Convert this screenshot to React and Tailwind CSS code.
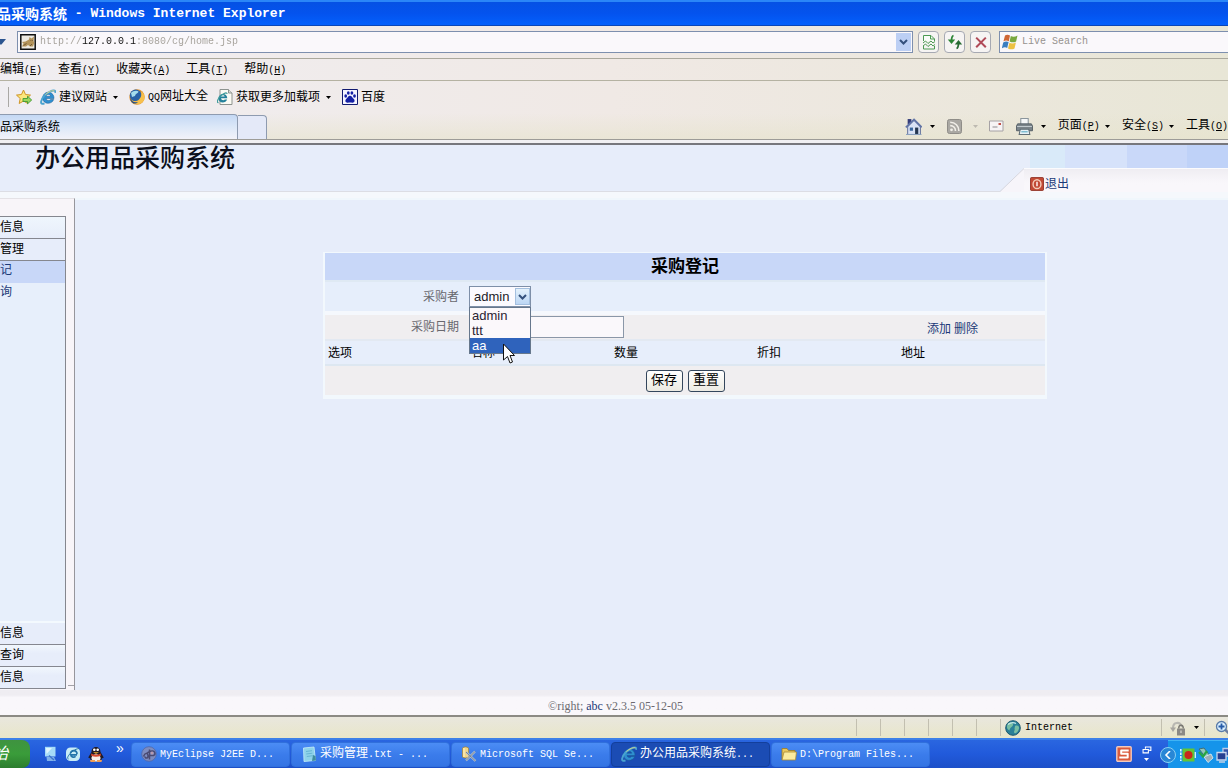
import React, { useState } from "react";

const quickLinks = [
  { label: "建议网站", icon: "ie", arrow: true },
  { prefix: "QQ", label: "网址大全", icon: "fox" },
  { label: "获取更多加载项", icon: "page", arrow: true },
  { label: "百度", icon: "paw" },
];

const menus = [
  ["编辑", "E"],
  ["查看", "Y"],
  ["收藏夹", "A"],
  ["工具", "T"],
  ["帮助", "H"],
];

const tasks = [
  { icon: "eclipse", latin: "MyEclipse J2EE D..." },
  { icon: "note", text: "采购管理", latin: ".txt - ..." },
  { icon: "sql", latin: "Microsoft SQL Se..." },
  { icon: "ie", text: "办公用品采购系统", latin: "...", active: true },
  { icon: "folder", latin: "D:\\Program Files..." },
];

const users = ["admin", "ttt", "aa"];

const Mono = ({ children }) => (
  <span className="font-['Liberation_Mono',monospace] text-[10px]">{children}</span>
);

const Arrow = ({ className = "text-black" }) => (
  <svg viewBox="0 0 5 3" className={`w-[5px] h-[3px] shrink-0 ${className}`}>
    <path d="M0 0h5L2.5 3z" fill="currentColor" />
  </svg>
);

const Icon = ({ name, className = "w-4 h-4" }) => {
  const shapes = {
    ie: (
      <>
        <path d="M14 9.500H6c.3 2.300 3.600 2.500 4.500 1h3.200C11.800 16 2.700 15.600 2.700 9c0-7.500 11.500-7.800 11.300.5zM6 7.200h4.700C10.300 4.800 6.400 4.800 6 7.200z" fill="#2f8fd0" stroke="#17598f" strokeWidth=".5" />
        <path d="M4.500 14.300C-.5 16.500.3 11 4.500 6.500 9 2 16.500-.8 15 3.800" fill="none" stroke="#49a3cf" strokeWidth="1.900" />
        <path d="M5.500 5.500C8.500 2.700 12.500 1 14.500 1.900" fill="none" stroke="#e0d486" strokeWidth="1" />
      </>
    ),
    fox: (
      <>
        <circle cx="8" cy="8" r="7.700" fill="#e3932c" />
        <circle cx="6.700" cy="6.500" r="5.900" fill="#2a62a6" />
        <path d="M2 4c2-2.500 6-3 7.500-1.500C9 4.500 7 4 6 7L3 8z" fill="#a5dcec" />
        <path d="M12 2c4.500 3.500 5 9 .5 12-4 2.500-9.500.8-11-3.500 3 2.500 6.500 2 8.500 0s3-5 2-8.500z" fill="#f7c04c" />
        <path d="M1 8c.5 4 4.500 6 8 5-3 3.500-8 1-8-5z" fill="#1f4c86" />
      </>
    ),
    page: (
      <>
        <path d="M3 .5h8.500L15 4v11.500H3z" fill="#fbfbf4" stroke="#8d938f" />
        <path d="M11.500.5V4H15" fill="#d7dcd5" stroke="#8d938f" />
        <path d="M10.300 9.300H4c.3 2.200 3 2.400 3.800 1.100h2.300C8.800 14.700 1.500 14.300 1.500 9.500c0-6 8.800-6.200 8.800-.2zM4 7.600h3.700c-.3-1.900-3.400-1.900-3.700 0z" fill="#24819b" />
        <path d="M1.500 13.500C-1 14 1 9 4 6.500S10 3 10 5" fill="none" stroke="#3f9c9b" strokeWidth="1.200" />
      </>
    ),
    paw: (
      <>
        <path d="M.5.5h15v15H.5z" fill="#f4f4ff" stroke="#111a70" />
        <ellipse cx="3.700" cy="7" rx="1.400" ry="1.800" fill="#1420a4" />
        <ellipse cx="6.300" cy="4" rx="1.400" ry="1.800" fill="#1420a4" />
        <ellipse cx="9.900" cy="4" rx="1.400" ry="1.800" fill="#1420a4" />
        <ellipse cx="12.500" cy="7" rx="1.400" ry="1.800" fill="#1420a4" />
        <path d="M8 6.800c1.800 0 2.400 2 3.800 3.300 1.600 1.700.5 3.900-1.500 3.600-1.500-.3-3-.3-4.500 0-2.200.3-3.200-2-1.600-3.600C5.600 8.800 6.200 6.800 8 6.800z" fill="#1420a4" />
      </>
    ),
    star: (
      <>
        <path d="M7.500 1l2 4.500 5 .6-3.700 3.400 1 5L7.500 12l-4.300 2.500 1-5L.5 6.100l5-.6z" fill="#fbe77c" stroke="#cf9425" strokeWidth="1" />
        <path d="M7 9.500h4.500V7.200l4.200 3.800-4.200 3.800v-2.300H7z" fill="#9bd65c" stroke="#3f9a35" strokeWidth=".9" />
      </>
    ),
    cat: (
      <>
        <path d="M.8.8h14.400v14.400H.8z" fill="#eeeae2" stroke="#111" strokeWidth="1.500" />
        <path d="M2 12.500l1.500-3L2 8l3.500-.5L9 5.500 9.500 3l2 1.500L14 2.500 13.500 7l.8 1.500L13 12.500h-3L8 11l-2 1.500z" fill="#b3935a" />
        <path d="M3.500 11.500l3-2M10.500 6.500h.8M12.300 6.500h.8M10 12l2-2" stroke="#6b5230" strokeWidth=".9" />
      </>
    ),
    broken: (
      <>
        <path d="M2.500 7V1.500h7.500L13.500 5v2" fill="#fafcf8" stroke="#4c9a52" />
        <path d="M9.500 1.500V5h4" fill="none" stroke="#4c9a52" />
        <path d="M2 9l2.500-2L7 9.500 10 7l2 2 2-1.500M2 12l2.500-2L7 12.500 10 10l2 2 2-1.500" fill="none" stroke="#4c9a52" />
        <path d="M2.500 12v3h11v-3" fill="none" stroke="#4c9a52" />
      </>
    ),
    refresh: (
      <>
        <path d="M6.500 1.500C5 2 4.500 3 4.500 7" fill="none" stroke="#2c8535" strokeWidth="1.800" />
        <path d="M.8 5.500h7.400L4.500 10z" fill="#2c8535" />
        <path d="M9.500 14.500c1.500-.5 2-1.500 2-5.500" fill="none" stroke="#276b32" strokeWidth="1.800" />
        <path d="M7.800 10.500L11.500 6l3.700 4.500z" fill="#276b32" />
      </>
    ),
    stop: <path d="M2.500 3l11 11M13.500 3l-11 11" stroke="#b04a58" strokeWidth="2.300" />,
    windows: (
      <>
        <path d="M3 1.500C4.700.3 6.500.6 8 1.600L6.800 7.200C5 6.200 3 6.300 1.500 7.200z" fill="#cf6634" />
        <path d="M8.800 2c2 1 4.200.9 6.700-.5l-1.400 6c-2 1.200-4.300 1.100-6.500 0z" fill="#79a83f" />
        <path d="M1.200 8.400c2-1.200 3.600-1.300 5.400-.3L5.200 13.900c-1.700-1-3.500-.8-5.400.4z" fill="#3b7fc0" />
        <path d="M7.400 8.700c2 1 4.300.9 6.500-.2l-1.400 6c-2 1.200-4.300 1.100-6.500 0z" fill="#ecc143" />
      </>
    ),
    home: (
      <>
        <path d="M2.500 1h3.500v5H2.500z" fill="#333b79" />
        <path d="M2.500 8v7.500h12V8l-6-6z" fill="#d9e2f5" stroke="#69769e" />
        <path d="M.8 8.800L8.500 1.500l7.200 7.300" fill="none" stroke="#6274a6" strokeWidth="1.800" />
        <path d="M4.500 9h3v3h-3z" fill="#3b679d" />
        <path d="M9.500 9h3v6.500h-3z" fill="#263750" />
        <path d="M1 15.500h14.500" stroke="#8aa0bd" />
      </>
    ),
    rss: (
      <>
        <rect x=".5" y="1.500" width="14" height="14" rx="2" fill="#aaa8a3" stroke="#8f8d88" />
        <circle cx="4.500" cy="11.800" r="1.400" fill="#f1efe9" />
        <path d="M3.200 7.600c3 0 5.300 2.300 5.300 5.300M3.200 4.300c5 0 8.700 3.700 8.700 8.600" fill="none" stroke="#f1efe9" strokeWidth="1.600" />
      </>
    ),
    mail: (
      <>
        <path d="M1.500 3h13.500v10H1.500z" fill="#f6f3f4" stroke="#a6a2a5" />
        <path d="M10.500 5h2.500v2h-2.500z" fill="#c05048" />
        <path d="M4.500 9h5" stroke="#8f8b90" />
      </>
    ),
    printer: (
      <>
        <path d="M4.500.5h7V7h-7z" fill="#f5f7f8" stroke="#8b959c" />
        <path d="M1.500 5.500h13l1 2v4.500H.5V7.500z" fill="#7a848a" stroke="#4a555d" strokeWidth=".8" />
        <path d="M1 8h14" stroke="#c0c9cd" />
        <path d="M4 10.500h8l1 5H3z" fill="#e6f1f6" stroke="#5f6d75" />
        <path d="M5 13h6" stroke="#56a8c2" />
      </>
    ),
    exit: (
      <>
        <rect x=".5" y=".5" width="15" height="15" rx="1.500" fill="#c24a35" stroke="#8e2f22" />
        <ellipse cx="8" cy="8.200" rx="4.500" ry="5" fill="none" stroke="#f5cdb9" strokeWidth="1.600" />
        <path d="M8 5.500v5" stroke="#fff" strokeWidth="1.600" />
      </>
    ),
    desktop: (
      <>
        <path d="M3 .8h10.500v9.700H3z" fill="#a6dbf8" />
        <path d="M4 2h6L4.500 8z" fill="#dff4ff" />
        <path d="M4.500 11h7.500l2 4H5z" fill="#7fb0ea" />
        <path d="M7 9.500l5 4.500" stroke="#3d74c8" strokeWidth="1.300" />
      </>
    ),
    browser: (
      <>
        <rect x="1" y="1.500" width="14" height="13.500" rx="4.500" fill="#c8ecf6" />
        <path d="M12 8.800H5.800c.3 2.800 3.700 2.800 4.700 1.400M5.500 7.600C5.500 3.500 12 3.500 12 8.200" fill="none" stroke="#2474aa" strokeWidth="1.700" />
        <path d="M3.500 13C0 12 8 3 14 2.500" fill="none" stroke="#2474aa" strokeWidth="1" />
      </>
    ),
    penguin: (
      <>
        <path d="M3.500 6C3.500-.8 12.500-.8 12.500 6l3.300 5.500-2 1-1 3H3.200l-1-3-2-1z" fill="#221b25" />
        <ellipse cx="8" cy="12" rx="4.600" ry="3.700" fill="#f7efe8" />
        <circle cx="6.300" cy="3.800" r="1.300" fill="#fff" />
        <circle cx="9.700" cy="3.800" r="1.300" fill="#fff" />
        <path d="M5 6.200h6L8 7.700z" fill="#f5b52d" />
        <path d="M3.200 7.500c3 1.600 6.700 1.600 9.600 0v2.300c-3 1.400-6.600 1.400-9.600 0z" fill="#d8492c" />
        <path d="M2 14h5v2H2.500zM9 14h5l-.5 2H9z" fill="#ee9d56" />
      </>
    ),
    eclipse: (
      <>
        <circle cx="8" cy="8" r="7.300" fill="#7d8cc0" stroke="#5267a8" strokeWidth=".8" />
        <path d="M8.500 3.500v10M2.500 10.500c1.500-4 4-4 4.500-1s-3 3.500-3 1M8.500 9.500h4c2.500-1 1.500-5-1.500-4.500S6 6 6 8" fill="none" stroke="#4a4a72" strokeWidth="1.500" />
        <circle cx="11" cy="7" r="1.500" fill="#b79bb0" />
      </>
    ),
    note: (
      <>
        <path d="M2.500 2L13 1l1.500 13.500L3 15.500z" fill="#8ed3ea" stroke="#c6edf8" strokeWidth=".8" />
        <path d="M5 5.500l6-.8M5.300 8l6-.8M5.800 10.500l6-.8" stroke="#66b5d4" />
        <path d="M12 9l2.500 1 .5 4.500-4 .5z" fill="#3f8c9e" />
      </>
    ),
    sql: (
      <>
        <path d="M1.500 2c2-1.500 4-1.500 6 0v9c-2 1.200-4 1.200-6 0z" fill="#f1d68a" stroke="#ab8430" strokeWidth=".7" />
        <path d="M3 2v9" stroke="#fff4c4" />
        <path d="M5 6l9.500 9M14 5.500L5 14.500" stroke="#b9c4ce" strokeWidth="2.200" />
        <path d="M5 6l9.500 9M14 5.500L5 14.500" stroke="#56657e" strokeWidth=".7" />
      </>
    ),
    folder: (
      <>
        <path d="M1 13.500v-11h5l1.500 2H14V7" fill="#e9c75b" stroke="#9a7a26" strokeWidth=".8" />
        <path d="M1 14L3 6h12.500l-1 8z" fill="#fbeb9e" stroke="#a88832" strokeWidth=".8" />
      </>
    ),
    globe: (
      <>
        <circle cx="8" cy="8" r="7.300" fill="#2a8098" stroke="#1b5870" />
        <path d="M3.500 3c3-1.500 5 0 4.500 2S5 7 4.500 10.500C1.500 9 1 6 3.500 3zM10 6c2-1 4.500 0 4 2.500S11 14 9.500 13s1-3 0-4z" fill="#79bfa3" />
        <path d="M3 4.500c2.500-2 6-2 8-1" fill="none" stroke="#c5e8ea" strokeWidth="1.200" />
      </>
    ),
    lock: (
      <>
        <path d="M3 8c0-6 7-7 9-1" fill="none" stroke="#b9b8b2" strokeWidth="2.200" />
        <path d="M0 7.500h6L3 12z" fill="#a8a6a0" />
        <rect x="7" y="8.500" width="8" height="7" fill="#8b8985" />
        <path d="M8.700 8.500c0-4.500 4.600-4.500 4.600 0" fill="none" stroke="#77756f" strokeWidth="1.400" />
        <path d="M11 10.500v2.500" stroke="#e8e6de" />
      </>
    ),
    zoom: (
      <>
        <path d="M10 9.500l5 5" stroke="#6f7fa0" strokeWidth="2.500" />
        <circle cx="6.500" cy="6.500" r="5" fill="#d9efff" stroke="#587aa8" strokeWidth="1.300" />
        <path d="M6.500 3.500v6M3.500 6.500h6" stroke="#285ca8" strokeWidth="1.800" />
      </>
    ),
    sogou: (
      <>
        <rect x=".8" y=".8" width="14.400" height="14.400" rx="1" fill="#d95a3c" stroke="#f3c9bc" strokeWidth="1.400" />
        <path d="M12.700 4.500H5.200v3.300h6.500v3.700H3.300" fill="none" stroke="#fff" strokeWidth="2" strokeLinejoin="round" />
      </>
    ),
    restore: (
      <>
        <path d="M5.500 4.500V1.700h8.700V7H11.500" fill="none" stroke="#fff" strokeWidth="1.700" />
        <path d="M1.700 5.500h8.500V11H1.700z" fill="none" stroke="#fff" strokeWidth="1.700" />
      </>
    ),
    record: (
      <>
        <path d="M2.500 1.500h12v13h-12z" fill="#63c534" />
        <circle cx="8.500" cy="8" r="4" fill="#c8281b" />
        <path d="M.8 2v12" stroke="#e9fbff" strokeWidth="1.500" strokeDasharray="2.500 1" />
        <path d="M15.300 5v6" stroke="#e9fbff" strokeWidth="1.200" />
      </>
    ),
    usb: (
      <>
        <path d="M1 2l5-1 6 8-3 3z" fill="#93c6b8" stroke="#3d6f77" />
        <path d="M6 10l7-3 2 4-5 4.500z" fill="#9fb0b8" stroke="#dff2f6" strokeWidth=".8" />
        <path d="M1 5l4 4.500L9 4" fill="none" stroke="#28a543" strokeWidth="2.200" />
      </>
    ),
    network: (
      <>
        <path d="M7 1.500h9V9H7z" fill="#3152a9" stroke="#b9cbe9" strokeWidth="1.300" />
        <path d="M1 5.500h9V13H1z" fill="#263f91" stroke="#c9d7ee" strokeWidth="1.300" />
        <path d="M3 15h6M12 11h3" stroke="#c4d1e5" strokeWidth="1.500" />
      </>
    ),
  };
  return (
    <svg viewBox="0 0 16 16" aria-hidden="true" className={`shrink-0 ${className}`}>
      {shapes[name]}
    </svg>
  );
};

const Chevron = () => (
  <svg viewBox="0 0 9 6" className="w-[9px] h-[6px]" aria-hidden="true">
    <path d="M1 1l3.500 3.500L8 1" fill="none" stroke="#34507c" strokeWidth="2" />
  </svg>
);

const BrowserBars = () => (
  <>
    <div className="h-[26px] shrink-0 flex items-center overflow-hidden whitespace-pre font-bold text-white border-t-2 border-[#2a86f8] border-b border-b-[#0a46b8] bg-linear-to-b from-[#0551e4] via-[#0453ee] to-[#0460fc]">
      <span className="text-sm -ml-[3px] leading-4">品采购系统</span>
      <span className="font-['Liberation_Mono',monospace] text-[13px] leading-4"> - Windows Internet Explorer</span>
    </div>

    <div className="shrink-0 bg-linear-to-r from-[#f0eef2] via-[#f0e9e5] to-[#e8e6d6]">
      <div className="h-[33px] flex items-center border-b border-[#aaa89c]">
        <button aria-label="最近浏览的页面" className="w-[17px]">
          <svg viewBox="0 0 6 6" className="w-[6px] h-[6px]">
            <path d="M0 0h6L1.500 5.500H0z" fill="#2c5590" />
          </svg>
        </button>
        <div className="flex-1 h-[22px] flex items-center gap-1 pl-[2px] bg-[#faf8fb] border border-[#7d8fae]">
          <Icon name="cat" />
          <input
            aria-label="地址"
            defaultValue="http://127.0.0.1:8080/cg/home.jsp"
            className="flex-1 h-4 outline-none font-['Liberation_Mono',monospace] text-[10px] text-transparent bg-clip-text bg-[linear-gradient(to_right,#a39f98_42px,#111111_42px,#111111_96px,#a39f98_96px)]"
          />
          <button aria-label="展开地址" className="w-[15px] h-[18px] mr-px flex items-center justify-center bg-[#bccff4]">
            <Chevron />
          </button>
        </div>
        <div className="flex gap-[5px] pl-[5px] pr-2">
          <button aria-label="兼容性视图" className="w-[21px] h-[22px] flex items-center justify-center rounded-sm border border-[#a6a9b2] bg-[#f6f4f3]">
            <Icon name="broken" />
          </button>
          <button aria-label="刷新" className="w-[21px] h-[22px] flex items-center justify-center rounded-sm border border-[#a6a9b2] bg-[#f6f4f3]">
            <Icon name="refresh" />
          </button>
          <button aria-label="停止" className="w-[21px] h-[22px] flex items-center justify-center rounded-sm border border-[#a6a9b2] bg-[#f6f4f3]">
            <Icon name="stop" className="w-[14px] h-[14px]" />
          </button>
        </div>
        <div className="w-[229px] h-[22px] flex items-center gap-1 pl-[2px] bg-[#faf8fb] border border-r-0 border-[#7d8fae]">
          <Icon name="windows" />
          <input
            aria-label="搜索"
            placeholder="Live Search"
            className="w-full h-4 outline-none font-['Liberation_Mono',monospace] text-[10px] placeholder:text-[#96928e]"
          />
        </div>
      </div>

      <div className="h-[22px] flex items-center gap-4 pt-px border-b border-[#b5b2a2]">
        {menus.map(([label, key]) => (
          <button key={key}>
            {label}
            <Mono>(<u>{key}</u>)</Mono>
          </button>
        ))}
      </div>

      <div className="h-8 flex items-center pl-2">
        <span className="h-5 border-l border-[#aaa8a5]" />
        <button aria-label="添加到收藏夹栏" className="ml-[7px] mr-2">
          <Icon name="star" />
        </button>
        <div className="flex gap-[9px]">
          {quickLinks.map((link) => (
            <button key={link.label} className="flex items-center">
              <Icon name={link.icon} />
              <span className="ml-[3px]">
                {link.prefix && <Mono>{link.prefix}</Mono>}
                {link.label}
              </span>
              {link.arrow && <span className="ml-[6px] mr-[2px]"><Arrow /></span>}
            </button>
          ))}
        </div>
      </div>

      <div className="h-[27px] flex border-b border-[#9d9c98] bg-linear-to-b from-transparent to-[#e6e3cc]/60">
        <button className="w-[238px] mt-px text-left rounded-tr-sm border-t border-r border-[#8e9bb0] bg-linear-to-b from-[#c4d8f4] via-[#dce8f8] to-[#f2f2f9]">
          品采购系统
        </button>
        <button aria-label="新选项卡" className="w-[29px] mt-[2px] rounded-tr-sm border-t border-r border-[#8e9bb0] bg-[#e4e9f8]" />
        <div className="flex-1 flex items-center justify-end">
          <button aria-label="主页" className="flex items-center gap-2 mr-3">
            <Icon name="home" className="w-[17px] h-[17px]" />
            <Arrow />
          </button>
          <button aria-label="源" className="flex items-center gap-[10px] mr-[10px]">
            <Icon name="rss" />
            <Arrow className="text-[#bdb9b0]" />
          </button>
          <button aria-label="阅读邮件" className="mr-3">
            <Icon name="mail" />
          </button>
          <button aria-label="打印" className="flex items-center gap-2 mr-3">
            <Icon name="printer" className="w-[17px] h-[17px]" />
            <Arrow />
          </button>
          <button className="flex items-center gap-[5px] mr-3">
            <span>页面<Mono>(<u>P</u>)</Mono></span>
            <Arrow />
          </button>
          <button className="flex items-center gap-[5px] mr-3">
            <span>安全<Mono>(<u>S</u>)</Mono></span>
            <Arrow />
          </button>
          <button className="whitespace-nowrap">工具<Mono>(<u>O</u>)</Mono></button>
        </div>
      </div>
    </div>
    <div className="h-[5px] shrink-0 bg-[#f1f0f2] border-b-2 border-[#77777c]" />
  </>
);

const Header = () => (
  <header className="h-[47px] shrink-0 flex justify-between bg-[#e7edfa]">
    <h1 className="flex-1 pl-[35px] text-[25px] leading-[27px] font-medium text-[#0b0f1c] border-b border-[#dcdde4] font-['Liberation_Serif','Noto_Sans_CJK_SC',serif]">
      办公用品采购系统
    </h1>
    <div className="w-[228px] flex flex-col">
      <div className="h-[23px] flex">
        <span className="w-[30px]" />
        <span className="w-[35px] bg-[#d9eaf9]" />
        <span className="w-[62px] bg-[#d6e2fa]" />
        <span className="w-[60px] bg-[#c9d8f9]" />
        <span className="flex-1 bg-[#bfd2f8]" />
      </div>
      <div className="flex-1 flex">
        <svg viewBox="0 0 24 24" className="w-6 h-6 shrink-0" aria-hidden="true">
          <path d="M0 24L24 0v24z" fill="#f7f5fa" />
          <path d="M0 23.500L24 .5" stroke="#d6d6de" />
        </svg>
        <div className="flex-1 bg-linear-to-b from-[#efedf2] to-[#f9f7fb] to-60% flex items-center pl-[6px] pt-[6px] border-t border-[#fbfbfd]">
          <a href="#logout" className="flex items-center gap-px text-[#1c3a78]">
            <Icon name="exit" className="w-[14px] h-[14px]" />
            退出
          </a>
        </div>
      </div>
    </div>
  </header>
);

const Sidebar = () => (
  <aside className="w-[75px] shrink-0 flex pt-[17px] pb-px bg-[#f8f5f9] border-t border-r border-t-[#e4e2e6] border-r-[#97969c]">
    <nav className="w-[66px] flex flex-col leading-[18px] border-t border-r border-[#85878f] bg-[#e7effb]">
      <button className="h-[22px] pb-[2px] text-left border-b border-[#85878f] bg-linear-to-b from-[#eff6fd] to-[#e7edfa]">信息</button>
      <button className="h-[22px] pb-[2px] text-left border-b border-[#85878f] bg-[#e7edfa]">管理</button>
      <a href="#register" className="h-[22px] bg-[#c8d7f8] text-[#1c3a78]">记</a>
      <a href="#query" className="h-[22px] text-[#1c3a78]">询</a>
      <div className="flex-1 border-b-2 border-[#f3f9fe]" />
      <button className="h-[22px] pb-[2px] text-left border-b border-[#85878f] bg-[#e7edfa]">信息</button>
      <button className="h-[22px] pb-[2px] text-left border-b border-[#85878f] bg-linear-to-b from-[#f1f7fd] to-[#e7edfa] to-40%">查询</button>
      <button className="h-[22px] pb-[2px] text-left border-b border-[#85878f] bg-linear-to-b from-[#f1f7fd] to-[#e7edfa] to-40%">信息</button>
    </nav>
    <span className="flex-1 ml-[2px] self-end h-1 border-t border-[#a3a2a8]" />
  </aside>
);

const BuyerSelect = () => {
  const [buyer, setBuyer] = useState("admin");
  return (
    <div className="relative w-[62px]">
      <select
        id="buyer"
        value={buyer}
        onChange={(e) => setBuyer(e.target.value)}
        className="block w-full h-[21px] pl-1 appearance-none bg-[#fbfaff] border border-[#7e8fa8] font-['Liberation_Sans',sans-serif] text-[13px] leading-4 text-[#1c1b28]"
      >
        {users.map((user) => (
          <option key={user}>{user}</option>
        ))}
      </select>
      <span className="absolute right-px top-[2px] w-[15px] h-[17px] flex items-center justify-center border border-[#a4bfdf] bg-linear-to-b from-[#e4f1fc] to-[#bcd6f4] pointer-events-none">
        <Chevron />
      </span>
      <ul className="absolute z-10 left-0 top-[21px] w-full bg-[#fbf8fb] border border-[#66778c] font-['Liberation_Sans',sans-serif] text-[13px] leading-[15px]">
        {users.map((user) => (
          <li
            key={user}
            onClick={() => setBuyer(user)}
            className={user === "aa" ? "pl-[2px] bg-[#2f63bc] text-white" : "pl-[2px] text-[#2b2332]"}
          >
            {user}
          </li>
        ))}
      </ul>
      <svg viewBox="0 0 12 21" className="absolute z-20 left-[34px] top-[57px] w-3 h-[21px]" aria-hidden="true">
        <path d="M.5 1v16l4-3.500L7 20l2.500-1L7 12.500h4.500z" fill="#fff" stroke="#111" />
      </svg>
    </div>
  );
};

const PurchaseForm = () => (
  <form className="mt-[52px] ml-[248px] mr-[181px] border-x-2 border-b-4 border-t border-[#f2f8fd]">
    <table className="w-full table-fixed border-collapse">
      <thead>
        <tr className="h-7 bg-[#c8d7f8] border-b-2 border-[#dfe9f3]">
          <th colSpan={5} className="text-[17px] leading-6 font-bold">采购登记</th>
        </tr>
      </thead>
      <tbody>
        <tr className="h-8 bg-[#e6eefb] border-b-4 border-[#f5f8fd]">
          <td className="pr-[10px] text-right text-[#68686e]">
            <label htmlFor="buyer">采购者</label>
          </td>
          <td colSpan={4}>
            <BuyerSelect />
          </td>
        </tr>
        <tr className="h-[27px] bg-[#f0eef0] border-b-2 border-[#e3e9f2]">
          <td className="pr-[10px] text-right text-[#68686e]">
            <label htmlFor="date">采购日期</label>
          </td>
          <td colSpan={3}>
            <input id="date" className="block w-[155px] h-[22px] px-1 bg-[#faf8fb] border border-[#8a97a8]" />
          </td>
          <td className="pl-[26px] pt-1 text-[#1c3a78]">
            <a href="#add">添加</a>
            <a href="#remove" className="ml-[3px]">删除</a>
          </td>
        </tr>
        <tr className="h-[25px] bg-[#e7eefb] border-b-2 border-[#dde7f1]">
          <td className="pl-[3px]">选项</td>
          <td className="pl-[2px]">名称</td>
          <td className="pl-px">数量</td>
          <td>折扣</td>
          <td>地址</td>
        </tr>
        <tr className="h-[30px] bg-[#f0eef0]">
          <td colSpan={5}>
            <div className="flex justify-center gap-[5px]">
              <button type="button" className="w-[37px] h-[22px] text-[13px] leading-4 pb-[2px] rounded-[3px] border border-[#34465c] bg-linear-to-b from-white to-[#eceae2]">保存</button>
              <button type="button" className="w-[37px] h-[22px] text-[13px] leading-4 pb-[2px] rounded-[3px] border border-[#34465c] bg-linear-to-b from-white to-[#eceae2]">重置</button>
            </div>
          </td>
        </tr>
      </tbody>
    </table>
  </form>
);

const StatusBar = () => (
  <div className="h-[21px] shrink-0 flex justify-end bg-linear-to-b from-[#e9e7de] to-[#e8e6c9]">
    {[1, 2, 3, 4, 5, 6].map((n) => (
      <span key={n} className="w-6 my-[2px] border-l border-[#c2bfb0]" />
    ))}
    <span className="w-[161px] my-[2px] pl-1 flex items-center gap-1 border-l border-[#c2bfb0]">
      <Icon name="globe" />
      <Mono>Internet</Mono>
    </span>
    <button aria-label="保护模式" className="w-[43px] my-[2px] pl-2 flex items-center gap-2 border-l border-[#c2bfb0]">
      <Icon name="lock" />
      <Arrow />
    </button>
    <button aria-label="缩放" className="w-6 my-[2px] pl-[10px] flex items-center overflow-hidden border-l border-[#c2bfb0]">
      <Icon name="zoom" />
    </button>
  </div>
);

const Taskbar = () => (
  <div className="h-[30px] shrink-0 flex items-center text-white border-t-2 border-[#3c80e8] bg-linear-to-b from-[#2a66e0] via-[#215adb] to-[#1c4fc8]">
    <button className="w-[30px] h-7 overflow-hidden text-left rounded-r-lg bg-linear-to-b from-[#3f9340] via-[#3a9c3a] to-[#2c7d2e]">
      <span className="block -ml-2 text-base leading-5 italic">始</span>
    </button>
    <div className="flex items-center gap-[7px] pl-3">
      <button aria-label="显示桌面"><Icon name="desktop" /></button>
      <button aria-label="浏览器"><Icon name="browser" /></button>
      <button aria-label="QQ"><Icon name="penguin" /></button>
    </div>
    <span className="w-[27px] pl-3 pb-3 text-sm leading-3">»</span>
    <div className="flex-1 flex gap-px">
      {tasks.map((task) => (
        <button
          key={task.icon}
          className={`w-[159px] h-[25px] pl-[9px] flex items-center gap-[3px] rounded-sm border text-left whitespace-nowrap ${
            task.active
              ? "bg-[#1b4cb4] border-[#133f9c]"
              : "bg-linear-to-b from-[#4c8df5] via-[#3b7ceb] to-[#3474e4] border-[#3170dc]"
          }`}
        >
          <Icon name={task.icon} />
          <span>
            {task.text}
            <Mono>{task.latin}</Mono>
          </span>
        </button>
      ))}
    </div>
    <Icon name="sogou" className="w-4 h-4" />
    <div className="w-9 pl-[10px] pb-[2px] flex flex-col items-start gap-[2px]">
      <Icon name="restore" className="w-[10px] h-[10px]" />
      <span className="ml-[2px] leading-none"><Arrow className="block text-white" /></span>
    </div>
    <div className="w-[60px] h-7 flex items-center gap-[2px] bg-[#1594ea] border-t border-[#3fb4f4]">
      <button aria-label="显示隐藏的图标" className="w-4 h-4 -ml-2 mr-[2px] shrink-0 rounded-full flex items-center justify-center border border-[#8ad0f2] bg-[#2887d6]">
        <svg viewBox="0 0 8 8" className="w-2 h-2"><path d="M6 0L2 4l4 4" fill="none" stroke="#fff" strokeWidth="1.600" /></svg>
      </button>
      <Icon name="record" />
      <Icon name="usb" />
      <Icon name="network" />
    </div>
  </div>
);

const App = () => (
  <div className="h-screen flex flex-col overflow-hidden text-xs leading-4 text-black bg-[#e7edfa] font-['Liberation_Sans','Noto_Sans_CJK_SC',sans-serif]">
    <BrowserBars />
    <Header />
    <main className="flex-1 min-h-0 flex flex-col">
      <div className="h-[6px] shrink-0 bg-[#f5f8fc]" />
      <div className="flex-1 min-h-0 flex">
        <Sidebar />
        <section className="flex-1 bg-[#e7edfa] border-t-2 border-[#f0f7fc]">
          <PurchaseForm />
        </section>
      </div>
    </main>
    <footer className="h-[27px] shrink-0 pt-2 pl-[3px] text-center font-['Liberation_Serif',serif] text-[#6c6a70] bg-linear-to-b from-[#efedf2] from-20% to-[#f9f7fb] to-30% border-b-2 border-[#8b8a84]">
      ©right; <a href="#abc" className="text-[#1c3a78]">abc</a> v2.3.5 05-12-05
    </footer>
    <StatusBar />
    <Taskbar />
  </div>
);

export default App;
